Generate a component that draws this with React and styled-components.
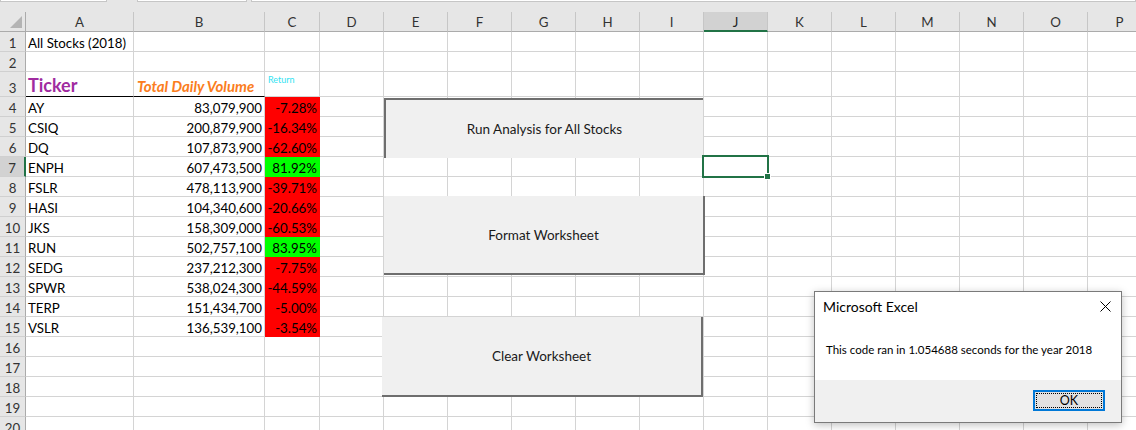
import React from "react";
import styled, { createGlobalStyle, css } from "styled-components";

const GlobalStyle = createGlobalStyle`
  html, body { margin: 0; padding: 0; background: #ffffff; overflow: hidden; }
  body { font-family: Lato, "Liberation Sans", sans-serif; }
  * { box-sizing: border-box; }
`;

const Sheet = styled.div`
  position: relative;
  width: 1136px;
  height: 430px;
  overflow: hidden;
  background: #ffffff;
`;

const TopStrip = styled.div`
  height: 12px;
  background: #e6e6e6;
  display: flex;
  align-items: flex-start;
  gap: 4px;
`;

const StripBox = styled.div`
  height: 2px;
  width: ${(p) => p.$w}px;
  margin-left: ${(p) => p.$ml || 0}px;
  background: #ffffff;
  border: 1px solid #c6c6c6;
  border-top: none;
  flex: ${(p) => (p.$grow ? 1 : "none")};
`;

const Grid = styled.div`
  display: grid;
  grid-template-columns: 26px 108px 131px 55px repeat(13, 64px);
  grid-template-rows: 20px 20px 20px 25px repeat(17, 20px);
  font-size: 13.3px;
  color: #000;
`;

const Corner = styled.div`
  background: #e6e6e6;
  border-right: 1px solid #ababab;
  border-bottom: 1px solid #ababab;
  display: flex;
  align-items: flex-end;
  justify-content: flex-end;
  padding: 0 3px 3px 0;
`;

const ColHead = styled.div`
  background: ${(p) => (p.$active ? "#d2d2d2" : "#e6e6e6")};
  border-right: 1px solid #c6c6c6;
  border-bottom: ${(p) => (p.$active ? "2px solid #217346" : "1px solid #ababab")};
  display: flex;
  align-items: center;
  justify-content: center;
  color: ${(p) => (p.$active ? "#222" : "#333")};
  font-size: 13.3px;
  padding-top: ${(p) => (p.$active ? "1px" : "0")};
`;

const RowHead = styled.div`
  background: ${(p) => (p.$active ? "#d2d2d2" : "#e6e6e6")};
  border-right: ${(p) => (p.$active ? "2px solid #217346" : "1px solid #ababab")};
  border-bottom: 1px solid #d0d0d0;
  display: flex;
  align-items: flex-end;
  justify-content: center;
  color: #333;
  line-height: 16px;
  font-size: 13.3px;
`;

const Cell = styled.div`
  border-right: 1px solid ${(p) => p.$fill || "#d4d4d4"};
  border-bottom: 1px solid ${(p) => (p.$underline ? "#000" : p.$fill || "#d4d4d4")};
  background: ${(p) => p.$fill || "#fff"};
  display: flex;
  align-items: flex-end;
  justify-content: ${(p) => (p.$right ? "flex-end" : "flex-start")};
  padding: 0 2px 0 2px;
  line-height: 16px;
  white-space: nowrap;
  overflow: visible;
  min-width: 0;
`;

const TickerHead = styled.span`
  font-size: 18px;
  font-weight: 700;
  color: #a02ba0;
  line-height: 22px;
`;

const VolumeHead = styled.span`
  font-size: 15px;
  font-weight: 700;
  font-style: italic;
  color: #fb7d20;
  line-height: 19px;
  margin-left: 1px;
`;

const ReturnHead = styled.span`
  font-size: 9px;
  color: #33e3f2;
  align-self: flex-start;
  margin-top: 3px;
  margin-left: 1px;
  line-height: 10px;
`;

const ShapeButton = styled.div`
  position: absolute;
  left: ${(p) => p.$x}px;
  top: ${(p) => p.$y}px;
  width: ${(p) => p.$w}px;
  height: ${(p) => p.$h}px;
  background: #f0f0f0;
  border-style: solid;
  border-color: #6e6e6e;
  ${(p) =>
    p.$inset
      ? css`border-width: 2px 0 0 2px;`
      : css`border-width: 0 2px 2px 0;`}
  display: flex;
  align-items: center;
  justify-content: center;
  font-size: 13.5px;
  color: #1a1a1a;
`;

const Selection = styled.div`
  position: absolute;
  left: 702px;
  top: 155px;
  width: 67px;
  height: 23px;
  border: 2px solid #217346;
  &::after {
    content: "";
    position: absolute;
    right: -4px;
    bottom: -4px;
    width: 5px;
    height: 5px;
    background: #217346;
    border: 1px solid #fff;
  }
`;

const Dialog = styled.div`
  position: absolute;
  left: 814px;
  top: 291px;
  width: 308px;
  height: 132px;
  border: 1px solid #7a7a7a;
  background: #fff;
  box-shadow: 0 2px 8px rgba(0, 0, 0, 0.25);
  display: flex;
  flex-direction: column;
  font-size: 12px;
  color: #000;
`;

const TitleBar = styled.div`
  height: 29px;
  display: flex;
  align-items: center;
  justify-content: space-between;
  padding: 0 10px 0 8px;
  font-size: 14px;
`;

const Message = styled.div`
  flex: 1;
  display: flex;
  align-items: center;
  padding: 0 0 2px 11px;
  font-size: 11.5px;
`;

const Footer = styled.div`
  height: 42px;
  background: #f0f0f0;
  display: flex;
  justify-content: flex-end;
  align-items: flex-start;
  padding: 10px 16px 0 0;
`;

const OkButton = styled.div`
  width: 72px;
  height: 21px;
  border: 2px solid #0078d7;
  background: #e1e1e1;
  outline: 1px dotted #000;
  outline-offset: -4px;
  display: flex;
  align-items: center;
  justify-content: center;
  font-size: 12.5px;
`;

const letters = "ABCDEFGHIJKLMNOP".split("");

const data = [
  ["AY", "83,079,900", "-7.28%", false],
  ["CSIQ", "200,879,900", "-16.34%", false],
  ["DQ", "107,873,900", "-62.60%", false],
  ["ENPH", "607,473,500", "81.92%", true],
  ["FSLR", "478,113,900", "-39.71%", false],
  ["HASI", "104,340,600", "-20.66%", false],
  ["JKS", "158,309,000", "-60.53%", false],
  ["RUN", "502,757,100", "83.95%", true],
  ["SEDG", "237,212,300", "-7.75%", false],
  ["SPWR", "538,024,300", "-44.59%", false],
  ["TERP", "151,434,700", "-5.00%", false],
  ["VSLR", "136,539,100", "-3.54%", false],
];

function renderRow(r) {
  const cells = [];
  const rest = (from) => {
    for (let c = from; c < 16; c++) cells.push(<Cell key={`${r}-${c}`} />);
  };
  if (r === 1) {
    cells.push(<Cell key="a">All Stocks (2018)</Cell>);
    rest(1);
  } else if (r === 3) {
    cells.push(
      <Cell key="a" $underline>
        <TickerHead>Ticker</TickerHead>
      </Cell>
    );
    cells.push(
      <Cell key="b" $underline>
        <VolumeHead>Total Daily Volume</VolumeHead>
      </Cell>
    );
    cells.push(
      <Cell key="c">
        <ReturnHead>Return</ReturnHead>
      </Cell>
    );
    rest(3);
  } else if (r >= 4 && r <= 15) {
    const [t, v, ret, up] = data[r - 4];
    cells.push(<Cell key="a">{t}</Cell>);
    cells.push(
      <Cell key="b" $right>
        {v}
      </Cell>
    );
    cells.push(
      <Cell key="c" $right $fill={up ? "#00ff00" : "#ff0000"}>
        {ret}
      </Cell>
    );
    rest(3);
  } else {
    rest(0);
  }
  return [
    <RowHead key={`h${r}`} $active={r === 7}>
      {r}
    </RowHead>,
    ...cells,
  ];
}

export default function App() {
  const rows = [];
  for (let r = 1; r <= 20; r++) rows.push(...renderRow(r));
  return (
    <>
      <GlobalStyle />
      <Sheet>
        <TopStrip>
          <StripBox $w={107} />
          <StripBox $w={110} $ml={26} />
          <StripBox $grow />
        </TopStrip>
        <Grid>
          <Corner>
            <svg width="12" height="12" viewBox="0 0 12 12">
              <polygon points="12,0 12,12 0,12" fill="#b4b4b4" />
            </svg>
          </Corner>
          {letters.map((l) => (
            <ColHead key={l} $active={l === "J"}>
              {l}
            </ColHead>
          ))}
          {rows}
        </Grid>

        <ShapeButton $x={384} $y={98} $w={319} $h={60} $inset>
          Run Analysis for All Stocks
        </ShapeButton>
        <ShapeButton $x={384} $y={196} $w={321} $h={79}>
          Format Worksheet
        </ShapeButton>
        <ShapeButton $x={382} $y={317} $w={321} $h={80}>
          Clear Worksheet
        </ShapeButton>

        <Selection />

        <Dialog>
          <TitleBar>
            <span>Microsoft Excel</span>
            <svg width="11" height="11" viewBox="0 0 11 11">
              <path d="M0.5 0.5 L10.5 10.5 M10.5 0.5 L0.5 10.5" stroke="#000" strokeWidth="1" />
            </svg>
          </TitleBar>
          <Message>This code ran in 1.054688 seconds for the year 2018</Message>
          <Footer>
            <OkButton>OK</OkButton>
          </Footer>
        </Dialog>
      </Sheet>
    </>
  );
}
